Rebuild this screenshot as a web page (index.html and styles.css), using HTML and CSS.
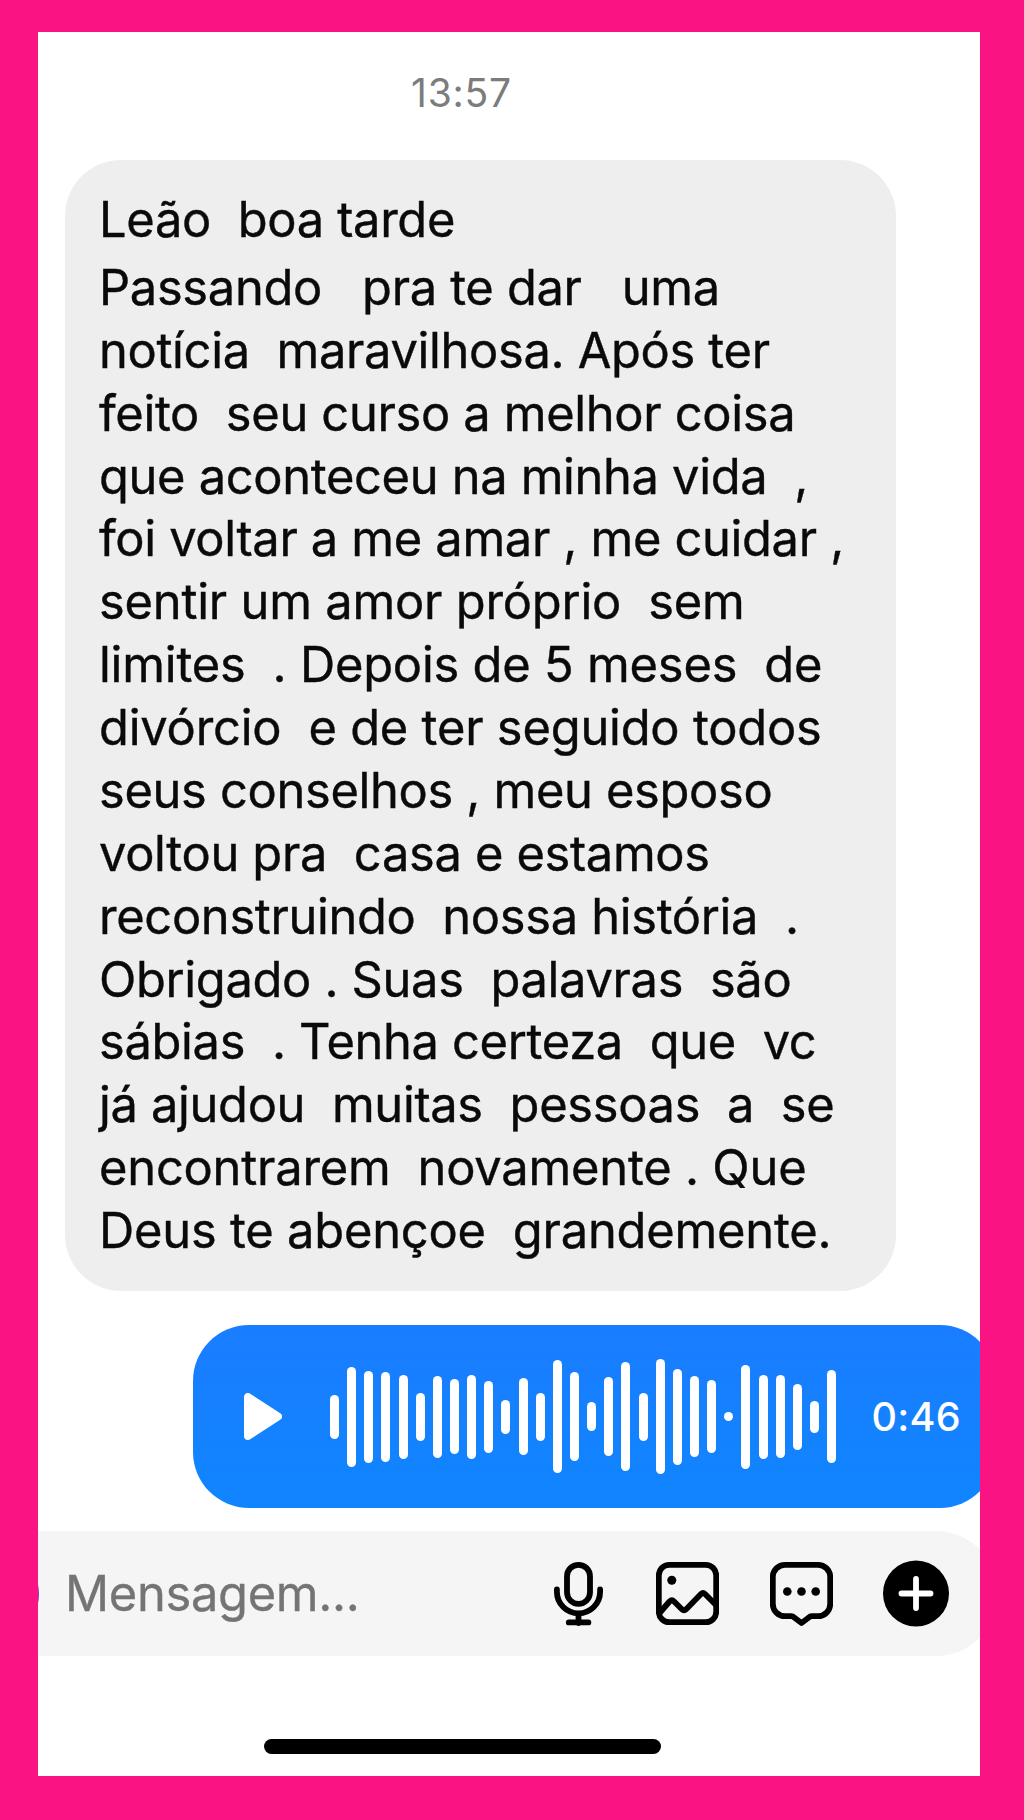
FILE: index.html
```html
<!DOCTYPE html>
<html lang="pt-BR">
<head>
    <meta charset="UTF-8">
    <meta name="viewport" content="width=device-width, initial-scale=1.0">
    <title>Mensagens</title>
    <link rel="stylesheet" href="styles.css">
</head>
<body>
    <main class="screen">
        <time class="timestamp">13:57</time>

        <div class="bubble received">
            <p class="greeting">Leão  boa tarde</p>
            <p>Passando   pra te dar   uma
notícia  maravilhosa. Após ter
feito  seu curso a melhor coisa
que aconteceu na minha vida  ,
foi voltar a me amar , me cuidar ,
<span class="loose">sentir um amor próprio  sem
limites  . Depois de 5 meses  de
divórcio  e de ter seguido todos</span>
seus conselhos , meu esposo
voltou pra  casa e estamos
reconstruindo  nossa história  .
Obrigado . Suas  palavras  são
sábias  . Tenha certeza  que  vc
já ajudou  muitas  pessoas  a  se
<span class="loose">encontrarem  novamente . Que
Deus te abençoe  grandemente.</span></p>
        </div>

        <div class="bubble audio">
            <svg class="play" width="38" height="47" viewBox="0 0 38 47">
                <path d="M4 4v39L34 23.5z" fill="#fff" stroke="#fff" stroke-width="8" stroke-linejoin="round"/>
            </svg>
            <div class="wave">
                <i style="height:44px"></i>
                <i style="height:100px"></i>
                <i style="height:92px"></i>
                <i style="height:90px"></i>
                <i style="height:84px"></i>
                <i style="height:48px"></i>
                <i style="height:82px"></i>
                <i style="height:75px"></i>
                <i style="height:84px"></i>
                <i style="height:72px"></i>
                <i style="height:34px"></i>
                <i style="height:77px"></i>
                <i style="height:48px"></i>
                <i style="height:113px"></i>
                <i style="height:89px"></i>
                <i style="height:29px"></i>
                <i style="height:79px"></i>
                <i style="height:109px"></i>
                <i style="height:48px"></i>
                <i style="height:115px"></i>
                <i style="height:96px"></i>
                <i style="height:81px"></i>
                <i style="height:73px"></i>
                <i style="height:9px"></i>
                <i style="height:104px"></i>
                <i style="height:84px"></i>
                <i style="height:83px"></i>
                <i style="height:66px"></i>
                <i style="height:32px"></i>
                <i style="height:93px"></i>
            </div>
            <span class="duration">0:46</span>
        </div>

        <div class="composer">
            <span class="camera"></span>
            <span class="placeholder">Mensagem...</span>
            <div class="actions">
                <svg width="49" height="67" viewBox="0 0 49 67" fill="none" stroke="#000" stroke-width="5.8" stroke-linecap="round" stroke-linejoin="round">
                    <rect x="13" y="4.8" width="23" height="39" rx="11.5"/>
                    <path d="M2.9 29.5v2.2a21.6 21.6 0 0 0 43.2 0v-2.2M24.5 54v9M14.8 62.4h19.6"/>
                </svg>
                <svg width="63" height="67" viewBox="0 0 63 67" fill="none" stroke="#000" stroke-width="5.8" stroke-linejoin="round">
                    <rect x="2.8" y="4.8" width="57.4" height="57.4" rx="10.5"/>
                    <path d="M4 52.5l9.500-11q2.300-2.300 4.600 0l8 8q1.900 1.900 3.800 0L45 34q2-2 4 0L60 45"/>
                    <circle cx="15.8" cy="20.3" r="4.5" fill="#000" stroke="none"/>
                </svg>
                <svg width="63" height="67" viewBox="0 0 63 67" fill="none" stroke="#000" stroke-width="5.8" stroke-linejoin="round">
                    <path d="M15 4.800h33a12.200 12.200 0 0 1 12.200 12.200v27a12.200 12.200 0 0 1-12.200 12.200h-6q-2 0-3.500 1.500L31.500 63l-7-5.300q-1.500-1.500-3.500-1.500h-6A12.200 12.200 0 0 1 2.800 44V17A12.200 12.200 0 0 1 15 4.800z"/>
                    <g fill="#000" stroke="none">
                        <circle cx="17.3" cy="31.5" r="4.3"/>
                        <circle cx="31.5" cy="31.5" r="4.3"/>
                        <circle cx="45.7" cy="31.5" r="4.3"/>
                    </g>
                </svg>
                <svg width="66" height="67" viewBox="0 0 66 67">
                    <circle cx="33" cy="33.5" r="33"/>
                    <path d="M33 19v29M18.5 33.5h29" stroke="#fff" stroke-width="5.8" stroke-linecap="round"/>
                </svg>
            </div>
        </div>

        <div class="home-indicator"></div>
    </main>
</body>
</html>
```
FILE: styles.css
```css
* {
    box-sizing: border-box;
}
body {
    margin: 0;
    padding: 32px 44px 44px 38px;
    height: 1820px;
    background-color: #fa1383;
    font-family: Inter, "Liberation Sans", sans-serif;
    color: #0a0a0a;
}
.screen {
    display: flex;
    flex-direction: column;
    align-items: flex-start;
    height: 1744px;
    background-color: #fff;
    overflow: hidden;
}
.timestamp {
    margin: 38px 0 0 373px;
    height: 46px;
    font-size: 39px;
    line-height: 46px;
    letter-spacing: 0.8px;
    color: #7c7c7c;
}
.bubble {
    border-radius: 56px;
    flex-shrink: 0;
}
.received {
    width: 831px;
    height: 1131px;
    margin: 44px 0 0 27px;
    padding: 29px 0 0 34px;
    background-color: #eee;
    font-size: 48.8px;
    line-height: 62.87px;
    letter-spacing: -0.32px;
    -webkit-text-stroke: 0.4px #0a0a0a;
}
.received p {
    margin: 0;
    white-space: pre;
}
.received .greeting {
    margin-bottom: 5px;
}
.loose {
    letter-spacing: -0.2px;
}
.audio {
    display: flex;
    align-items: center;
    width: 803px;
    height: 183px;
    margin: 34px 0 0 155px;
    padding-left: 51px;
    background: linear-gradient(#1a7dff, #1085ff);
    color: #fff;
}
.play {
    margin-right: 48px;
}
.wave {
    display: flex;
    align-items: center;
    justify-content: space-between;
    width: 506.5px;
    margin-right: 35px;
}
.wave i {
    width: 9px;
    border-radius: 5px;
    background-color: #fff;
}
.duration {
    font-size: 39.5px;
    font-weight: 500;
    letter-spacing: 0.3px;
}
.composer {
    display: flex;
    align-items: center;
    width: 960px;
    height: 125px;
    margin-top: 23px;
    flex-shrink: 0;
    background-color: #f5f5f6;
    border-radius: 0 62px 62px 0;
}
.camera {
    width: 90px;
    height: 90px;
    margin-left: -89px;
    flex-shrink: 0;
    border-radius: 50%;
    background-color: #7a3fc0;
}
.placeholder {
    width: 489px;
    margin-left: 26px;
    flex-shrink: 0;
    font-size: 48.8px;
    letter-spacing: -0.3px;
    color: #747476;
    -webkit-text-stroke: 0.3px #747476;
}
.actions {
    display: flex;
    align-items: center;
    gap: 50.5px;
}
.actions svg {
    flex-shrink: 0;
}
.actions svg:first-child {
    margin-right: 2.5px;
}
.home-indicator {
    width: 397px;
    height: 15px;
    margin: 83px 0 0 226px;
    border-radius: 8px;
    background-color: #000;
}
```
